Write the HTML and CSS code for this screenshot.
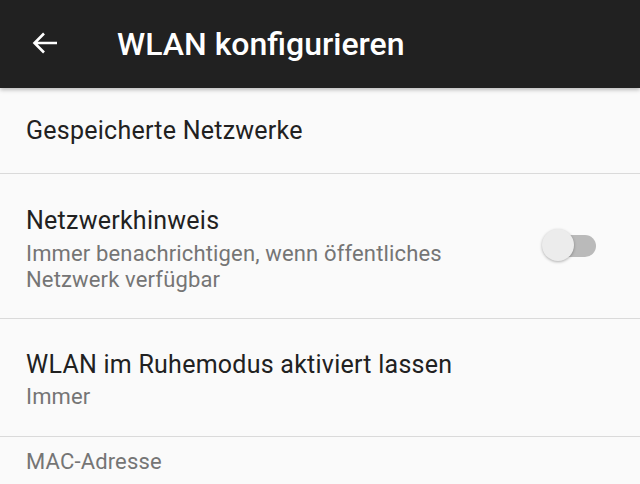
FILE: index.html
```html
<!DOCTYPE html>
<html lang="de">
<head>
<meta charset="utf-8">
<link rel="stylesheet" href="styles.css">
</head>
<body>
<header class="appbar">
  <svg class="back" width="26" height="22" viewBox="0 0 26 22" aria-hidden="true">
    <path d="M25 11H2.5M12 1.5L2.5 11L12 20.5" fill="none" stroke="#fff" stroke-width="2.6" stroke-linecap="butt" stroke-linejoin="miter"/>
  </svg>
  <h1 class="title">WLAN konfigurieren</h1>
</header>
<main class="list">
  <div class="row row-single">
    <div class="primary">Gespeicherte Netzwerke</div>
  </div>
  <div class="row row-toggle">
    <div class="texts">
      <div class="primary">Netzwerkhinweis</div>
      <div class="secondary">Immer benachrichtigen, wenn öffentliches<br>Netzwerk verfügbar</div>
    </div>
    <div class="switch"><span class="track"></span><span class="thumb"></span></div>
  </div>
  <div class="row row-double">
    <div class="texts">
      <div class="primary">WLAN im Ruhemodus aktiviert lassen</div>
      <div class="secondary">Immer</div>
    </div>
  </div>
  <div class="row row-cat">
    <div class="secondary">MAC-Adresse</div>
  </div>
</main>
</body>
</html>
```
FILE: styles.css
```css
html, body {
  margin: 0;
  padding: 0;
  background: #fafafa;
  font-family: Roboto, "Liberation Sans", sans-serif;
  width: 640px;
  height: 484px;
  overflow: hidden;
}
.appbar {
  height: 88px;
  background: #212121;
  display: flex;
  align-items: center;
  padding-left: 32px;
  box-shadow: 0 2px 4px rgba(0,0,0,0.25);
  position: relative;
  z-index: 1;
}
.back {
  display: block;
  margin-top: -2px;
}
.title {
  margin: 0 0 0 59px;
  color: #fff;
  font-size: 32px;
  font-weight: 500;
  line-height: 36px;
}
.list {
  display: flex;
  flex-direction: column;
}
.row {
  display: flex;
  align-items: center;
  padding-left: 26px;
  border-bottom: 1px solid #dadada;
  box-sizing: border-box;
}
.row-single { height: 86px; }
.row-toggle { height: 145px; justify-content: space-between; padding-right: 42px; }
.row-double { height: 118px; }
.row-cat { height: 50px; border-bottom: none; align-items: flex-start; padding-top: 12px; }
.primary {
  color: #212121;
  font-size: 25px;
  letter-spacing: 0.25px;
  line-height: 30px;
}
.secondary {
  color: #757575;
  font-size: 22px;
  letter-spacing: 0.15px;
  line-height: 26px;
}
.row-toggle .primary { margin-bottom: 5px; }
.row-toggle .texts { margin-top: 7px; }
.row-double .primary { margin-bottom: 4px; }
.row-double .texts { margin-top: 4px; }
.switch {
  position: relative;
  width: 56px;
  height: 34px;
}
.track {
  position: absolute;
  left: 14px;
  top: 6px;
  width: 40px;
  height: 22px;
  border-radius: 11px;
  background: #bababa;
}
.thumb {
  position: absolute;
  left: 0;
  top: 0;
  width: 32px;
  height: 32px;
  border-radius: 50%;
  background: #ececec;
  box-shadow: 0 1px 3px rgba(0,0,0,0.3);
}
```
